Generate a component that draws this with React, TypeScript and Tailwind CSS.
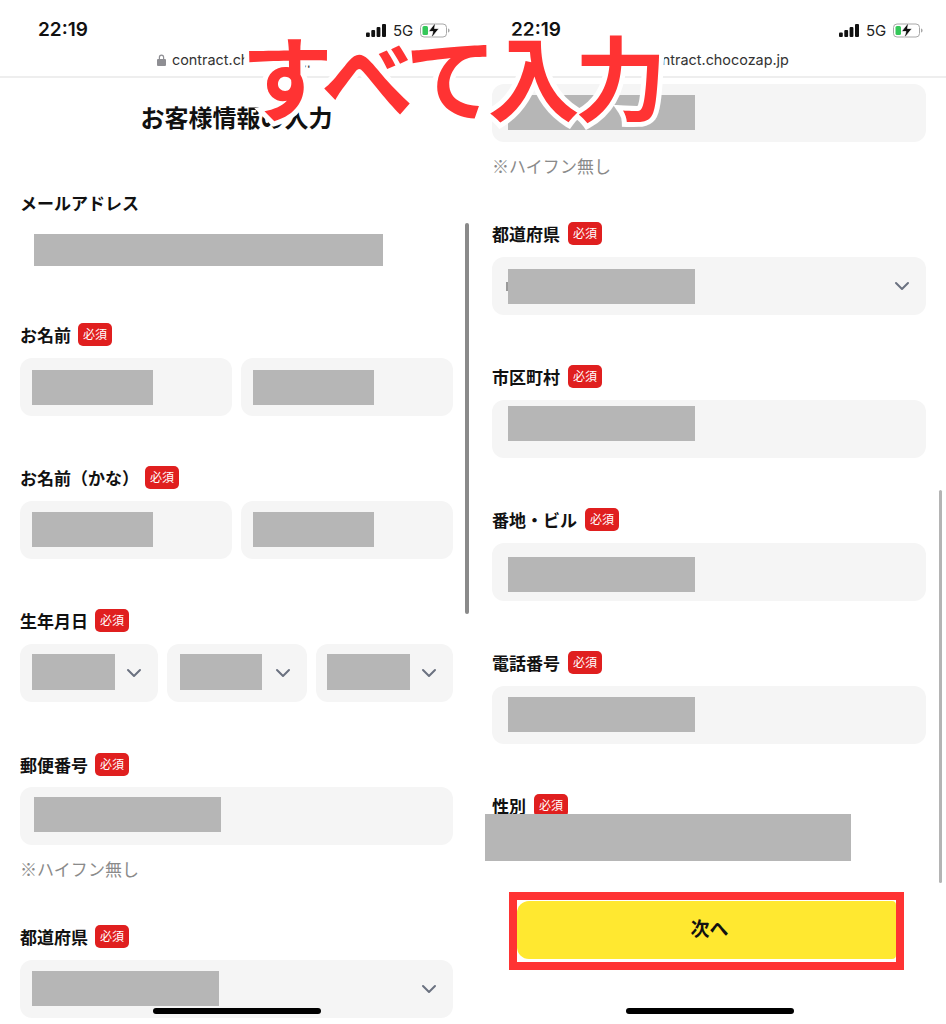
import type { ReactNode } from 'react';

const cjk = "font-['Noto_Sans_CJK_JP',sans-serif]";

function StatusIcons() {
  return (
    <div className="flex items-center">
      {/* signal */}
      <svg width="20" height="13" viewBox="0 0 20 13" fill="#111">
        <rect x="0" y="8.500" width="3.800" height="4.500" rx="1" />
        <rect x="5.300" y="6" width="3.800" height="7" rx="1" />
        <rect x="10.600" y="3" width="3.800" height="10" rx="1" />
        <rect x="16" y="0" width="4" height="13" rx="1" />
      </svg>
      <span className="ml-[7px] w-[20px] font-['Inter',sans-serif] text-[15px] leading-none text-[#222]">5G</span>
      {/* battery charging */}
      <svg className="ml-[7px]" width="31" height="17" viewBox="0 0 31 17">
        <rect x="0.500" y="2" width="26" height="13" rx="3.500" fill="none" stroke="#a8a8a8" />
        <rect x="2.500" y="4" width="5.500" height="9" rx="1.500" fill="#34c759" />
        <path d="M28 6.500v4c1-.3 1.600-1 1.600-2s-.6-1.700-1.600-2z" fill="#a8a8a8" />
        <path d="M15.500 0.500 8.500 9.500h4.500l-2 7 8-10h-4.500l1-6z" fill="#111" stroke="#fff" strokeWidth="0.700" />
      </svg>
    </div>
  );
}

function Header() {
  return (
    <div className="h-[78px] shrink-0 border-b-2 border-[#eeeeee] pt-[18px] pr-[22px] pl-[38px]">
      <div className="flex h-[24px] items-center justify-between">
        <span className="font-['Inter',sans-serif] text-[19px] leading-[24px] font-semibold text-[#111]">22:19</span>
        <StatusIcons />
      </div>
      <div className="mt-[8px] ml-[119px] flex h-[20px] items-center gap-[6px]">
        <svg width="9" height="12" viewBox="0 0 9 12" fill="#8e8e93">
          <path d="M1.800 5V3.300a2.700 2.700 0 0 1 5.400 0V5H8a1 1 0 0 1 1 1v5a1 1 0 0 1-1 1H1a1 1 0 0 1-1-1V6a1 1 0 0 1 1-1zm1.200 0h3V3.300a1.500 1.500 0 0 0-3 0z" />
        </svg>
        <span className="font-['Inter',sans-serif] text-[14.400px] leading-none whitespace-nowrap text-[#333]">contract.chocozap.jp</span>
      </div>
    </div>
  );
}

function Badge() {
  return (
    <span className={`flex h-[23px] w-[34px] items-center justify-center rounded-[5px] bg-[#e01f1f] text-[12px] leading-none text-white ${cjk}`}>
      必須
    </span>
  );
}

function Label({ text, gap = 'gap-[7px]', badge = true, className = '' }: { text: string; gap?: string; badge?: boolean; className?: string }) {
  return (
    <div className={`flex h-[24px] items-center ${gap} ${className}`}>
      <span className={`text-[17px] leading-none font-bold text-[#111] ${cjk}`}>{text}</span>
      {badge && <Badge />}
    </div>
  );
}

function Redact({ className }: { className: string }) {
  return <div className={`shrink-0 bg-[#b6b6b6] ${className}`} />;
}

function Chevron() {
  return (
    <svg width="16" height="10" viewBox="0 0 16 10" fill="none" stroke="#6b7280" strokeWidth="2" strokeLinecap="round" strokeLinejoin="round">
      <path d="M2 2l6 6 6-6" />
    </svg>
  );
}

function Field({ children, className = '' }: { children: ReactNode; className?: string }) {
  return <div className={`flex h-[58px] items-center rounded-[12px] bg-[#f5f5f5] ${className}`}>{children}</div>;
}

function Note({ className }: { className: string }) {
  return <div className={`h-[24px] text-[17px] leading-[22px] text-[#8a8a8a] ${cjk} ${className}`}>※ハイフン無し</div>;
}

function Scrollbar({ className }: { className: string }) {
  return <div className={`absolute rounded-full ${className}`} />;
}

function HomeBar({ className }: { className: string }) {
  return <div className={`absolute top-[1008px] h-[6px] w-[168px] rounded-full bg-black ${className}`} />;
}

function LeftPhone() {
  return (
    <div className="relative flex h-[1024px] w-[473px] shrink-0 flex-col overflow-hidden">
      <Header />
      <h1 className={`mt-[22px] h-[34px] text-center text-[24px] leading-[34px] font-bold text-[#111] ${cjk}`}>お客様情報の入力</h1>
      <div className="flex flex-col pr-[20px] pl-[20px]">
        <Label text="メールアドレス" badge={false} className="mt-[56px]" />
        <Redact className="mt-[20px] ml-[14px] h-[32px] w-[349px]" />

        <Label text="お名前" className="mt-[56px]" />
        <div className="mt-[12px] flex gap-[9px]">
          <Field className="flex-1 pl-[12px]"><Redact className="h-[35px] w-[121px]" /></Field>
          <Field className="flex-1 pl-[12px]"><Redact className="h-[35px] w-[121px]" /></Field>
        </div>

        <Label text="お名前（かな）" gap="gap-[6px]" className="mt-[49px]" />
        <div className="mt-[12px] flex gap-[9px]">
          <Field className="flex-1 pl-[12px]"><Redact className="mt-[11px] h-[35px] w-[121px] self-start" /></Field>
          <Field className="flex-1 pl-[12px]"><Redact className="mt-[11px] h-[35px] w-[121px] self-start" /></Field>
        </div>

        <Label text="生年月日" className="mt-[49px]" />
        <div className="mt-[12px] flex gap-[9px]">
          <Field className="flex-1 justify-between pr-[16px] pl-[12px]">
            <Redact className="mt-[10px] h-[36px] w-[83px] self-start" />
            <Chevron />
          </Field>
          <Field className="flex-1 justify-between pr-[16px] pl-[13px]">
            <Redact className="mt-[10px] h-[36px] w-[82px] self-start" />
            <Chevron />
          </Field>
          <Field className="flex-1 justify-between pr-[16px] pl-[11px]">
            <Redact className="mt-[10px] h-[36px] w-[83px] self-start" />
            <Chevron />
          </Field>
        </div>

        <Label text="郵便番号" className="mt-[50px]" />
        <Field className="mt-[11px] pl-[14px]"><Redact className="mt-[10px] h-[35px] w-[187px] self-start" /></Field>
        <Note className="mt-[13px]" />

        <Label text="都道府県" className="mt-[42px]" />
        <Field className="mt-[12px] justify-between pr-[16px] pl-[12px]">
          <Redact className="mt-[11px] h-[35px] w-[187px] self-start" />
          <Chevron />
        </Field>
      </div>
      <Scrollbar className="top-[223px] left-[465px] h-[391px] w-[4px] bg-[#8a8a8a]" />
      <HomeBar className="left-[153px]" />
    </div>
  );
}

function RightPhone() {
  return (
    <div className="relative flex h-[1024px] w-[473px] shrink-0 flex-col overflow-hidden">
      <Header />
      <div className="flex flex-col pr-[20px] pl-[19px]">
        <Field className="mt-[6px] pl-[16px]"><Redact className="mt-[11px] h-[35px] w-[187px] self-start" /></Field>
        <Note className="mt-[13px]" />

        <Label text="都道府県" gap="gap-[8px]" className="mt-[42px]" />
        <Field className="mt-[12px] justify-between pr-[16px] pl-[14px]">
          <div className="flex items-center">
            <div className="h-[9px] w-[2px] bg-[#9a9a9a]" />
            <Redact className="h-[35px] w-[187px]" />
          </div>
          <Chevron />
        </Field>

        <Label text="市区町村" gap="gap-[8px]" className="mt-[49px]" />
        <Field className="mt-[12px] pl-[16px]"><Redact className="mt-[6px] h-[35px] w-[187px] self-start" /></Field>

        <Label text="番地・ビル" gap="gap-[8px]" className="mt-[49px]" />
        <Field className="mt-[12px] pl-[16px]"><Redact className="mt-[14px] h-[35px] w-[187px] self-start" /></Field>

        <Label text="電話番号" gap="gap-[8px]" className="mt-[49px]" />
        <Field className="mt-[12px] pl-[16px]"><Redact className="mt-[11px] h-[35px] w-[187px] self-start" /></Field>

        <Label text="性別" gap="gap-[8px]" className="mt-[49px]" />
        <Redact className="-mt-[3px] -ml-[7px] h-[47px] w-[366px]" />

        <div className="mt-[31px] ml-[17px] h-[78px] w-[395px] border-[8px] border-[#ff3333] pt-[1px]">
          <button className={`flex h-[58px] w-[379px] items-center justify-center rounded-l-[12px] rounded-r-[4px] bg-[#ffe830] pb-[3px] pl-[6px] text-[19px] font-bold text-[#111] ${cjk}`}>
            次へ
          </button>
        </div>
      </div>
      <Scrollbar className="top-[490px] left-[466px] h-[393px] w-[3px] bg-[#b4b4b4]" />
      <HomeBar className="left-[153px]" />
    </div>
  );
}

export default function App() {
  return (
    <div className="relative flex h-[1024px] w-[946px] overflow-hidden bg-white">
      <LeftPhone />
      <RightPhone />
      {/* caption laid over both screens */}
      <div className={`absolute top-[14px] left-[241px] text-[92px] leading-[120px] font-bold tracking-[-5px] whitespace-nowrap text-[#ff3333] [-webkit-text-stroke:10px_white] [paint-order:stroke_fill] [word-spacing:-20px] ${cjk}`}>
        すべて 入力
      </div>
    </div>
  );
}
